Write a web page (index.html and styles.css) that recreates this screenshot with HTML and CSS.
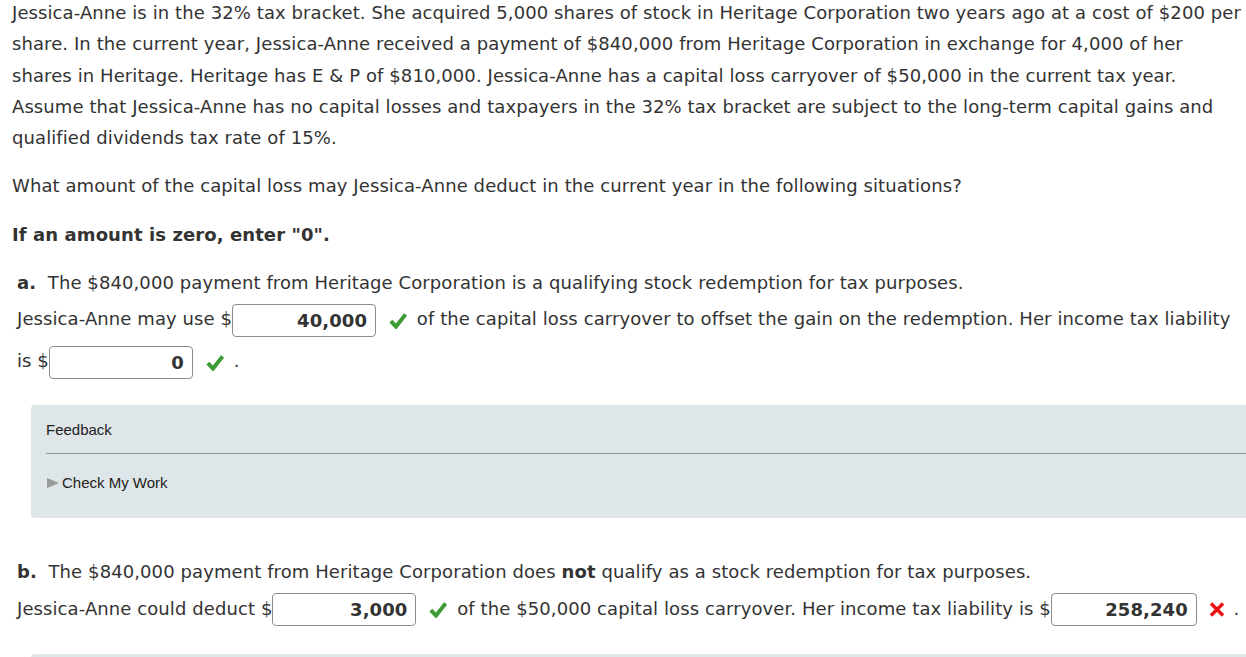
FILE: index.html
```html
<!DOCTYPE html>
<html>
<head>
<meta charset="utf-8">
<link rel="stylesheet" href="styles.css">
</head>
<body>
<div class="page">
  <p class="text intro">Jessica-Anne is in the 32% tax bracket. She acquired 5,000 shares of stock in Heritage Corporation two years ago at a cost of $200 per share. In the current year, Jessica-Anne received a payment of $840,000 from Heritage Corporation in exchange for 4,000 of her shares in Heritage. Heritage has E &amp; P of $810,000. Jessica-Anne has a capital loss carryover of $50,000 in the current tax year. Assume that Jessica-Anne has no capital losses and taxpayers in the 32% tax bracket are subject to the long-term capital gains and qualified dividends tax rate of 15%.</p>
  <p class="text">What amount of the capital loss may Jessica-Anne deduct in the current year in the following situations?</p>
  <p class="text strong">If an amount is zero, enter "0".</p>

  <div class="part">
    <p class="text question"><b>a.</b>&nbsp; The $840,000 payment from Heritage Corporation is a qualifying stock redemption for tax purposes.</p>
    <p class="text answer">Jessica-Anne may use $<span class="field">40,000</span><svg class="mark check" viewBox="0 0 18 17" width="18" height="17"><path d="M1.8 9.2 L7 14.6 L16.6 2.4" fill="none" stroke="#3d9b35" stroke-width="4" stroke-linejoin="miter"/></svg> of the capital loss carryover to offset the gain on the redemption. Her income tax liability is $<span class="field">0</span><svg class="mark check" viewBox="0 0 18 17" width="18" height="17"><path d="M1.8 9.2 L7 14.6 L16.6 2.4" fill="none" stroke="#3d9b35" stroke-width="4" stroke-linejoin="miter"/></svg>&nbsp;.</p>
  </div>

  <div class="feedback">
    <div class="fb-title">Feedback</div>
    <div class="fb-rule"></div>
    <div class="fb-toggle"><span class="tri"></span>Check My Work</div>
  </div>

  <div class="part part-b">
    <p class="text question"><b>b.</b>&nbsp; The $840,000 payment from Heritage Corporation does <b>not</b> qualify as a stock redemption for tax purposes.</p>
    <p class="text answer">Jessica-Anne could deduct $<span class="field">3,000</span><svg class="mark check" viewBox="0 0 18 17" width="18" height="17"><path d="M1.8 9.2 L7 14.6 L16.6 2.4" fill="none" stroke="#3d9b35" stroke-width="4" stroke-linejoin="miter"/></svg> of the $50,000 capital loss carryover. Her income tax liability is $<span class="field field-wide">258,240</span><svg class="mark cross" viewBox="0 0 16 15" width="16" height="15"><path d="M2 1.5 L14 13.5 M14 1.5 L2 13.5" fill="none" stroke="#ee1111" stroke-width="3.4"/></svg>&nbsp;.</p>
  </div>

  <div class="feedback"></div>
</div>
</body>
</html>
```

FILE: styles.css
```css
html, body {
  margin: 0;
  padding: 0;
  background: #ffffff;
}

.page {
  padding: 0 0 0 12px;
  overflow: hidden;
}

.text {
  font-family: "DejaVu Sans", Verdana, sans-serif;
  font-size: 18px;
  letter-spacing: 0.09px;
  color: #333333;
  line-height: 31.3px;
  margin: 0 0 17px 0;
}

.intro {
  margin-top: -3px;
}

.strong {
  font-weight: bold;
}

.part {
  padding-left: 5px;
}

.question {
  margin-bottom: 0;
}

.answer {
  line-height: 42px;
  margin-bottom: 0;
}

.field {
  display: inline-block;
  box-sizing: border-box;
  width: 144px;
  height: 33px;
  line-height: 31px;
  border: 1px solid #8c8c8c;
  border-radius: 4px;
  padding-right: 8px;
  text-align: right;
  font-weight: bold;
  color: #333333;
  vertical-align: middle;
  background: #ffffff;
}

.field-wide {
  width: 146px;
}

.mark {
  vertical-align: middle;
  margin-left: 13px;
  margin-right: 4px;
}

.cross {
  margin-left: 12px;
  margin-right: 3px;
}

.feedback {
  margin: 23px 0 0 19px;
  background: #dfe6e9;
  border-radius: 4px 0 0 4px;
  padding: 17px 0 27px 15px;
  font-family: "Liberation Sans", Arial, sans-serif;
  font-size: 15px;
  color: #222222;
}

.fb-title {
  line-height: 16px;
}

.fb-rule {
  height: 1px;
  background: #939b9f;
  margin: 15px 0 21px 0;
}

.fb-toggle {
  line-height: 16px;
  display: flex;
  align-items: center;
}

.tri {
  display: inline-block;
  width: 0;
  height: 0;
  border-top: 5.5px solid transparent;
  border-bottom: 5.5px solid transparent;
  border-left: 12px solid #9a9a9a;
  margin: 0 3px 0 1px;
}

.part-b {
  margin-top: 38px;
}

.part-b + .feedback {
  margin-top: 24px;
  height: 40px;
}
```
